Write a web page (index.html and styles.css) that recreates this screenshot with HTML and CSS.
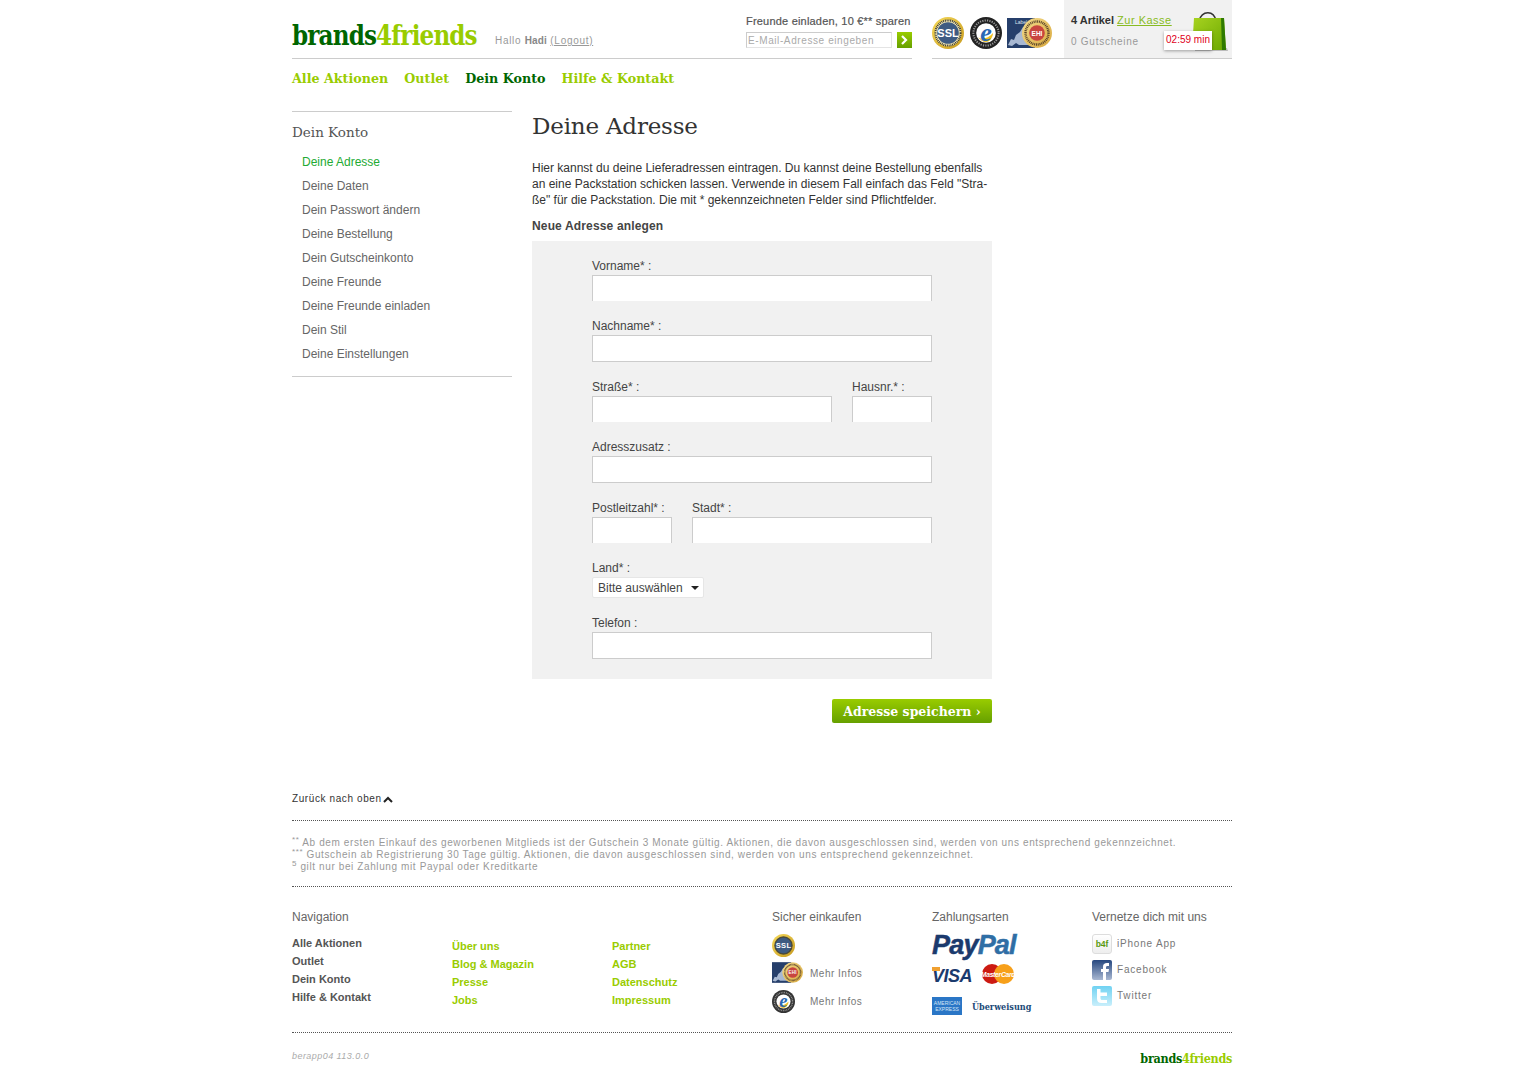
FILE: index.html
```html
<!DOCTYPE html>
<html lang="de">
<head>
  <meta charset="UTF-8">
  <title>Deine Adresse - brands4friends</title>
  <link rel="stylesheet" href="styles.css">
</head>
<body>
  <!-- shared gradients -->
  <svg class="sprite" width="0" height="0">
    <defs>
      <linearGradient id="goldGrad" x1="0" y1="0" x2="1" y2="1">
        <stop offset="0" stop-color="#f5d95a"/>
        <stop offset="1" stop-color="#c79a1e"/>
      </linearGradient>
      <linearGradient id="ehiGrad" x1="0" y1="0" x2="1" y2="1">
        <stop offset="0" stop-color="#f4dc8e"/>
        <stop offset="1" stop-color="#d8a83c"/>
      </linearGradient>
      <linearGradient id="bagGrad" x1="0" y1="0" x2="1" y2="1">
        <stop offset="0" stop-color="#a8d320"/>
        <stop offset="1" stop-color="#6aa800"/>
      </linearGradient>
      <linearGradient id="fbGrad" x1="0" y1="0" x2="0" y2="1">
        <stop offset="0" stop-color="#26477f"/>
        <stop offset="1" stop-color="#a9b8d2"/>
      </linearGradient>
      <linearGradient id="twGrad" x1="0" y1="0" x2="0" y2="1">
        <stop offset="0" stop-color="#6fd2f2"/>
        <stop offset="1" stop-color="#c9effb"/>
      </linearGradient>
    </defs>
  </svg>

  <div class="page">
    <header class="topbar">
      <div class="topbar-left">
        <a class="logo"><span class="logo-text"><span class="logo-dark">brands</span>4friends</span></a>
        <span class="hello">Hallo <b>Hadi</b> <u>(Logout)</u></span>
        <div class="invite">
          <div class="invite-title">Freunde einladen, 10 €** sparen</div>
          <div class="invite-form">
            <input class="invite-input" type="text" placeholder="E-Mail-Adresse eingeben">
            <span class="invite-btn">
              <svg width="7" height="10" viewBox="0 0 7 10"><path d="M1 1l4 4-4 4" fill="none" stroke="#fff" stroke-width="2.2"/></svg>
            </span>
          </div>
        </div>
      </div>
      <div class="topbar-right">
        <div class="seals">
          <svg width="32" height="32" viewBox="0 0 32 32">
            <circle cx="16" cy="16" r="16" fill="url(#goldGrad)"/>
            <circle cx="16" cy="16" r="13.2" fill="#f4e9b8"/>
            <circle cx="16" cy="16" r="12.6" fill="none" stroke="#3c3c30" stroke-width="2" stroke-dasharray="1 .8"/>
            <circle cx="16" cy="16" r="10.8" fill="#3e5b82"/>
            <text x="16" y="20" class="badge-txt" font-size="11" fill="#fff">SSL</text>
          </svg>
          <svg width="32" height="32" viewBox="0 0 32 32">
            <circle cx="16" cy="16" r="16" fill="#222"/>
            <circle cx="16" cy="16" r="12.6" fill="none" stroke="#999" stroke-width="2" stroke-dasharray="1.2 1.2"/>
            <circle cx="16" cy="16" r="9.8" fill="#fff"/>
            <path d="M8 20c3 3 10 2 15-4 0 4-3 9-7 9-3 0-6-2-8-5z" fill="#f0c020"/>
            <text x="16" y="24" class="badge-e-txt" font-size="26" fill="#2a68b4">e</text>
          </svg>
          <svg class="seal-ehi" width="45" height="30" viewBox="0 0 45 30">
            <rect x="0" y="0" width="28" height="30" fill="#263f6b"/>
            <path d="M1 27l3-6 3 1 2-5 4-3 3-5 5 1 4 5-2 12H12l-3-2-4 3z" fill="#a8b8d2"/>
            <text x="8" y="6" class="badge-small" font-size="5" fill="#dfe6f0">Label</text>
            <circle cx="30" cy="15" r="15" fill="url(#ehiGrad)"/>
            <circle cx="30" cy="15" r="11.5" fill="none" stroke="#57422a" stroke-width="2.4" stroke-dasharray="1 .8"/>
            <circle cx="30" cy="15" r="7.8" fill="#c8453f"/>
            <text x="30" y="17.6" class="badge-txt" font-size="6.5" fill="#fff">EHI</text>
          </svg>
        </div>
        <div class="cart">
          <div class="cart-line"><b>4 Artikel</b> <a class="cart-link">Zur Kasse</a></div>
          <div class="cart-vouchers">0 Gutscheine</div>
          <svg class="cart-bag" width="38" height="42" viewBox="0 0 38 42">
            <path d="M4 41h33l-1-3H4z" fill="#bbb"/>
            <path d="M8 11c3-11 15-11 17 0" fill="none" stroke="#333" stroke-width="1.5"/>
            <path d="M3 8h30l2 32H1z" fill="url(#bagGrad)"/>
            <path d="M30 8h3l2 32h-4z" fill="#2f7a00"/>
          </svg>
          <div class="cart-timer">02:59 min</div>
        </div>
      </div>
    </header>

    <nav class="mainnav">
      <a>Alle Aktionen</a>
      <a>Outlet</a>
      <a class="current">Dein Konto</a>
      <a>Hilfe &amp; Kontakt</a>
    </nav>

    <div class="columns">
      <aside class="sidebar">
        <h2>Dein Konto</h2>
        <ul>
          <li class="active">Deine Adresse</li>
          <li>Deine Daten</li>
          <li>Dein Passwort ändern</li>
          <li>Deine Bestellung</li>
          <li>Dein Gutscheinkonto</li>
          <li>Deine Freunde</li>
          <li>Deine Freunde einladen</li>
          <li>Dein Stil</li>
          <li>Deine Einstellungen</li>
        </ul>
      </aside>

      <main class="content">
        <h1>Deine Adresse</h1>
        <p class="intro">Hier kannst du deine Lieferadressen eintragen. Du kannst deine Bestellung ebenfalls<br>
          an eine Packstation schicken lassen. Verwende in diesem Fall einfach das Feld "Stra-<br>
          ße" für die Packstation. Die mit * gekennzeichneten Felder sind Pflichtfelder.</p>
        <h3>Neue Adresse anlegen</h3>

        <form class="address-form">
          <div class="field">
            <label>Vorname* :</label>
            <input class="w-full open" type="text">
          </div>
          <div class="field">
            <label>Nachname* :</label>
            <input class="w-full" type="text">
          </div>
          <div class="field-row">
            <div class="field">
              <label>Straße* :</label>
              <input class="w-street open" type="text">
            </div>
            <div class="field">
              <label>Hausnr.* :</label>
              <input class="w-house open" type="text">
            </div>
          </div>
          <div class="field">
            <label>Adresszusatz :</label>
            <input class="w-full" type="text">
          </div>
          <div class="field-row">
            <div class="field">
              <label>Postleitzahl* :</label>
              <input class="w-zip open" type="text">
            </div>
            <div class="field">
              <label>Stadt* :</label>
              <input class="w-city open" type="text">
            </div>
          </div>
          <div class="field">
            <label>Land* :</label>
            <span class="select-wrap">
              <select class="country"><option>Bitte auswählen</option></select>
            </span>
          </div>
          <div class="field last">
            <label>Telefon :</label>
            <input class="w-full" type="text">
          </div>
        </form>

        <div class="form-actions">
          <button class="save-btn" type="button">Adresse speichern ›</button>
        </div>
      </main>
    </div>

    <footer class="footer">
      <a class="to-top">Zurück nach oben<svg class="to-top-arrow" width="10" height="7" viewBox="0 0 10 7"><path d="M1 6l4-4 4 4" fill="none" stroke="#222" stroke-width="2"/></svg></a>
      <div class="notes">
        <sup>**</sup> Ab dem ersten Einkauf des geworbenen Mitglieds ist der Gutschein 3 Monate gültig. Aktionen, die davon ausgeschlossen sind, werden von uns entsprechend gekennzeichnet.<br>
        <sup>***</sup> Gutschein ab Registrierung 30 Tage gültig. Aktionen, die davon ausgeschlossen sind, werden von uns entsprechend gekennzeichnet.<br>
        <sup>5</sup> gilt nur bei Zahlung mit Paypal oder Kreditkarte
      </div>

      <div class="footer-grid">
        <div class="fcol">
          <h4>Navigation</h4>
          <ul class="flinks dark">
            <li>Alle Aktionen</li>
            <li>Outlet</li>
            <li>Dein Konto</li>
            <li>Hilfe &amp; Kontakt</li>
          </ul>
        </div>
        <div class="fcol">
          <ul class="flinks lime">
            <li>Über uns</li>
            <li>Blog &amp; Magazin</li>
            <li>Presse</li>
            <li>Jobs</li>
          </ul>
        </div>
        <div class="fcol">
          <ul class="flinks lime">
            <li>Partner</li>
            <li>AGB</li>
            <li>Datenschutz</li>
            <li>Impressum</li>
          </ul>
        </div>
        <div class="fcol">
          <h4>Sicher einkaufen</h4>
          <div class="safe-list">
            <div class="safe-row r1">
              <svg width="23" height="23" viewBox="0 0 32 32">
                <circle cx="16" cy="16" r="16" fill="url(#goldGrad)"/>
                <circle cx="16" cy="16" r="12.8" fill="#4a4a3a"/>
                <circle cx="16" cy="16" r="10.8" fill="#3e5b82"/>
                <text x="16" y="20" class="badge-txt" font-size="10.5" fill="#fff">SSL</text>
              </svg>
            </div>
            <div class="safe-row r2">
              <svg width="31" height="21" viewBox="0 0 45 30">
                <rect x="0" y="0" width="28" height="30" fill="#263f6b"/>
                <path d="M1 27l3-6 3 1 2-5 4-3 3-5 5 1 4 5-2 12H12l-3-2-4 3z" fill="#a8b8d2"/>
                <circle cx="30" cy="15" r="15" fill="url(#ehiGrad)"/>
                <circle cx="30" cy="15" r="11.5" fill="none" stroke="#57422a" stroke-width="2.4" stroke-dasharray="1 .8"/>
                <circle cx="30" cy="15" r="7.8" fill="#c8453f"/>
                <text x="30" y="17.6" class="badge-txt" font-size="6.5" fill="#fff">EHI</text>
              </svg>
              <span>Mehr Infos</span>
            </div>
            <div class="safe-row r3">
              <svg width="23" height="23" viewBox="0 0 32 32">
                <circle cx="16" cy="16" r="16" fill="#333"/>
                <circle cx="16" cy="16" r="12.6" fill="none" stroke="#999" stroke-width="2" stroke-dasharray="1.2 1.2"/>
                <circle cx="16" cy="16" r="9.8" fill="#fff"/>
                <path d="M8 20c3 3 10 2 15-4 0 4-3 9-7 9-3 0-6-2-8-5z" fill="#f0c020"/>
                <text x="16" y="24" class="badge-e-txt" font-size="26" fill="#2a68b4">e</text>
              </svg>
              <span>Mehr Infos</span>
            </div>
          </div>
        </div>
        <div class="fcol">
          <h4>Zahlungsarten</h4>
          <div class="pay-list">
            <div class="paypal"><span class="pp-a">Pay</span><span class="pp-b">Pal</span></div>
            <div class="pay-row cards">
              <span class="visa">VISA</span>
              <svg width="32" height="20" viewBox="0 0 32 20">
                <circle cx="10" cy="10" r="10" fill="#cc1a12"/>
                <circle cx="22" cy="10" r="10" fill="#f7a01a"/>
                <text x="16" y="12.5" class="mc-txt" font-size="6.8" fill="#fff">MasterCard</text>
              </svg>
            </div>
            <div class="pay-row bank">
              <span class="amex">AMERICAN<br>EXPRESS</span>
              <span class="transfer">Überweisung</span>
            </div>
          </div>
        </div>
        <div class="fcol">
          <h4>Vernetze dich mit uns</h4>
          <div class="social-list">
            <div class="social-row">
              <span class="ico ico-app">b4f</span>
              <span>iPhone App</span>
            </div>
            <div class="social-row">
              <svg class="ico" width="20" height="20" viewBox="0 0 20 20">
                <rect width="20" height="20" rx="2" fill="url(#fbGrad)"/>
                <path d="M11 20v-8H9V9h2V7c0-3 1.500-4 4-4h2v3h-1.500c-1 0-1.500.5-1.500 1.500V9h3l-.5 3H14v8z" fill="#fff"/>
              </svg>
              <span>Facebook</span>
            </div>
            <div class="social-row">
              <svg class="ico" width="20" height="20" viewBox="0 0 20 20">
                <rect width="20" height="20" rx="2" fill="url(#twGrad)"/>
                <path d="M5 3h3.500v3.500H15V10H8.500v2c0 1.500.5 2 2 2H15v3h-5.500C6.500 17 5 15.500 5 12.500z" fill="#fff"/>
              </svg>
              <span>Twitter</span>
            </div>
          </div>
        </div>
      </div>

      <div class="footer-end">
        <span class="build">berapp04 113.0.0</span>
        <span class="logo-small"><span class="logo-dark">brands</span>4friends</span>
      </div>
    </footer>
  </div>
</body>
</html>
```

FILE: styles.css
```css
* {
  box-sizing: border-box;
}

body {
  margin: 0;
  font-family: "Liberation Sans", Arial, sans-serif;
  font-size: 12px;
  line-height: 16px;
  color: #444;
  background: #fff;
}

ul {
  list-style: none;
  margin: 0;
  padding: 0;
}

.sprite {
  display: block;
  overflow: hidden;
}

.badge-txt {
  font-family: "Liberation Sans", Arial, sans-serif;
  font-weight: bold;
  text-anchor: middle;
}

.badge-e-txt {
  font-family: "Liberation Serif", serif;
  font-style: italic;
  font-weight: bold;
  text-anchor: middle;
}

.badge-small {
  font-family: "Liberation Sans", Arial, sans-serif;
}

.mc-txt {
  font-family: "Liberation Sans", Arial, sans-serif;
  font-weight: bold;
  font-style: italic;
  text-anchor: middle;
  letter-spacing: -0.3px;
}

.page {
  width: 940px;
  margin: 0 auto;
}

/* header */
.topbar {
  display: flex;
  justify-content: space-between;
  height: 59px;
}

.topbar-left {
  width: 620px;
  display: flex;
  align-items: flex-end;
  border-bottom: 1px solid #ccc;
}

.logo {
  width: 203px;
  height: 30px;
  margin-bottom: 7px;
  overflow: visible;
  white-space: nowrap;
}

/* rockwell stand-in: wide slab squeezed down to the logo's width */
.logo-text {
  display: inline-block;
  font-family: "DejaVu Serif", serif;
  font-weight: bold;
  font-size: 27px;
  line-height: 30px;
  letter-spacing: -1px;
  color: #99cc00;
  transform: scaleX(0.855);
  transform-origin: left center;
}

.logo-dark {
  color: #006600;
}

.hello {
  font-size: 10px;
  line-height: 12px;
  color: #999;
  letter-spacing: 0.7px;
  margin-bottom: 11px;
}

.hello b {
  color: #888;
  letter-spacing: 0.1px;
}

.invite {
  margin-left: auto;
  width: 166px;
  margin-bottom: 10px;
}

.invite-title {
  font-size: 11px;
  line-height: 14px;
  color: #555;
  white-space: nowrap;
  margin-bottom: 4px;
  letter-spacing: 0.2px;
  -webkit-text-stroke: 0.2px #555;
}

.invite-form {
  display: flex;
  justify-content: space-between;
}

.invite-input {
  width: 146px;
  height: 16px;
  border: 1px solid #ccc;
  border-right-color: #e4e4e4;
  border-bottom-color: #e4e4e4;
  padding: 0 1px;
  font-family: inherit;
  font-size: 10px;
  letter-spacing: 0.6px;
  background: #fff;
}

.invite-input::placeholder {
  color: #aaa;
  opacity: 1;
}

.invite-btn {
  width: 15px;
  height: 16px;
  background: linear-gradient(#99cc00, #66a000);
  display: flex;
  align-items: center;
  justify-content: center;
}

.topbar-right {
  width: 300px;
  display: flex;
  border-bottom: 1px solid #ccc;
}

.seals {
  width: 132px;
  display: flex;
  align-items: flex-start;
  padding-top: 17px;
  gap: 6px;
}

.seal-ehi {
  margin-left: -1px;
  margin-top: 1px;
}

.cart {
  flex: 1;
  background: #f1f1f1;
  padding: 12px 0 0 7px;
  position: relative;
}

.cart-line {
  font-size: 11px;
  line-height: 16px;
  color: #333;
}

.cart-link {
  color: #88bb22;
  text-decoration: underline;
  letter-spacing: 0.5px;
}

.cart-vouchers {
  font-size: 10px;
  line-height: 14px;
  color: #999;
  letter-spacing: 0.75px;
  margin-top: 7px;
}

.cart-bag {
  position: absolute;
  left: 127px;
  top: 10px;
}

.cart-timer {
  position: absolute;
  left: 100px;
  top: 31px;
  width: 48px;
  height: 19px;
  background: #fff;
  box-shadow: 0 1px 3px rgba(0, 0, 0, 0.35);
  color: #e0001a;
  font-size: 10px;
  line-height: 18px;
  text-align: center;
  white-space: nowrap;
}

/* main navigation */
.mainnav {
  display: flex;
  gap: 16px;
  height: 52px;
  padding-top: 11px;
  font-family: "DejaVu Serif", serif;
  font-weight: bold;
  font-size: 12.7px;
  line-height: 18px;
  color: #99cc00;
}

.mainnav .current {
  color: #006600;
}

/* columns */
.columns {
  display: flex;
  gap: 20px;
}

.sidebar {
  width: 220px;
  height: 266px;
  border-top: 1px solid #ccc;
  border-bottom: 1px solid #ccc;
}

.sidebar h2 {
  margin: 11px 0 9px;
  font-family: "DejaVu Serif", serif;
  font-weight: normal;
  font-size: 13.5px;
  line-height: 18px;
  color: #555;
}

.sidebar li {
  padding-left: 10px;
  line-height: 24px;
  color: #666;
}

.sidebar li.active {
  color: #22aa33;
}

.content {
  width: 460px;
}

.content h1 {
  margin: 0 0 19px;
  font-family: "DejaVu Serif", serif;
  font-weight: normal;
  font-size: 23px;
  line-height: 30px;
  letter-spacing: -0.2px;
  color: #333;
}

.intro {
  margin: 0 0 10px;
  color: #333;
  white-space: nowrap;
}

.content h3 {
  margin: 0 0 7px;
  font-size: 12px;
  line-height: 16px;
  letter-spacing: 0.15px;
  color: #444;
}

.address-form {
  background: #f1f1f1;
  padding: 18px 60px 20px;
}

.field {
  margin-bottom: 18px;
}

.field.last {
  margin-bottom: 0;
}

.field label {
  display: block;
  height: 16px;
  line-height: 14px;
  color: #444;
}

.field-row {
  display: flex;
  gap: 20px;
}

.field input {
  display: block;
  height: 27px;
  border: 1px solid #ccc;
  background: #fff;
  padding: 0 4px;
}

/* these show no lower edge in the original */
.field input.open {
  height: 26px;
  border-bottom: 0;
}

.w-full {
  width: 340px;
}

.w-street {
  width: 240px;
}

.w-house {
  width: 80px;
}

.w-zip {
  width: 80px;
}

.w-city {
  width: 240px;
}

.select-wrap {
  display: block;
  width: 112px;
  height: 21px;
  position: relative;
}

.select-wrap::after {
  content: "";
  position: absolute;
  right: 5px;
  top: 9px;
  border-top: 4px solid #222;
  border-left: 4px solid transparent;
  border-right: 4px solid transparent;
}

.country {
  appearance: none;
  -webkit-appearance: none;
  display: block;
  width: 112px;
  height: 21px;
  border: 1px solid #e6e6e6;
  border-radius: 2px;
  background: #fff;
  padding: 0 0 0 5px;
  font-family: inherit;
  font-size: 12px;
  color: #444;
}

.form-actions {
  display: flex;
  justify-content: flex-end;
  margin-top: 20px;
}

.save-btn {
  width: 160px;
  height: 24px;
  border: 0;
  border-radius: 2px;
  background: linear-gradient(#99cc00, #66a000);
  color: #fff;
  font-family: "DejaVu Serif", serif;
  font-weight: bold;
  font-size: 12.5px;
  line-height: 22px;
  padding: 2px 0 0;
}

/* footer */
.footer {
  margin-top: 70px;
}

.to-top {
  display: block;
  height: 28px;
  border-bottom: 1px dotted #555;
  font-size: 10px;
  line-height: 12px;
  color: #333;
  letter-spacing: 0.6px;
}

.to-top-arrow {
  margin-left: 1px;
  vertical-align: -1px;
}

.notes {
  height: 66px;
  padding-top: 16px;
  border-bottom: 1px dotted #555;
  font-size: 10px;
  line-height: 12px;
  color: #999;
  letter-spacing: 0.61px;
  white-space: nowrap;
}

.notes sup {
  font-size: 8px;
  line-height: 0;
}

.footer-grid {
  display: grid;
  grid-template-columns: repeat(6, 160px);
  height: 146px;
  padding-top: 23px;
  border-bottom: 1px dotted #555;
}

.fcol h4 {
  margin: 0 0 10px;
  font-weight: normal;
  font-size: 12px;
  line-height: 14px;
  color: #666;
}

.flinks {
  font-size: 11px;
  line-height: 18px;
  font-weight: bold;
}

.flinks.dark {
  color: #555;
}

.flinks.lime {
  color: #99cc00;
  padding-top: 27px;
}

.safe-row {
  display: flex;
  align-items: center;
  font-size: 10px;
  color: #777;
  letter-spacing: 0.5px;
}

.safe-row span {
  margin-left: 7px;
}

.safe-row.r1 {
  height: 23px;
  margin-bottom: 5px;
}

.safe-row.r2 {
  height: 21px;
  margin-bottom: 7px;
}

.safe-row.r2 span {
  padding-top: 2px;
}

.safe-row.r3 {
  height: 23px;
}

.safe-row.r3 span {
  margin-left: 15px;
}

.paypal {
  font-style: italic;
  font-weight: bold;
  font-size: 27px;
  line-height: 24px;
  letter-spacing: -0.8px;
  height: 24px;
  margin-top: -1px;
  -webkit-text-stroke: 0.5px currentColor;
}

.pp-a {
  color: #1b3a6d;
}

.pp-b {
  color: #2f6ea5;
}

.pay-row {
  display: flex;
  align-items: center;
}

.cards {
  margin-top: 7px;
  height: 20px;
  gap: 11px;
}

.visa {
  position: relative;
  font-style: italic;
  font-weight: bold;
  font-size: 18px;
  line-height: 20px;
  color: #1b3a6d;
  width: 39px;
  padding-top: 4px;
  letter-spacing: -0.5px;
}

.visa::before {
  content: "";
  position: absolute;
  left: 0;
  top: 5px;
  width: 8px;
  height: 4px;
  background: #f0a030;
}

.bank {
  margin-top: 13px;
  gap: 10px;
}

.amex {
  width: 30px;
  height: 18px;
  background: #2a76c6;
  color: #d6e6f6;
  font-size: 5px;
  line-height: 6px;
  text-align: center;
  padding-top: 3px;
}

.transfer {
  font-family: "DejaVu Serif Condensed", "DejaVu Serif", serif;
  font-weight: bold;
  font-size: 9px;
  color: #1b4a78;
  padding-top: 1px;
}

.social-row {
  display: flex;
  align-items: center;
  gap: 5px;
  height: 20px;
  margin-bottom: 6px;
  font-size: 10px;
  color: #777;
  letter-spacing: 0.8px;
}

.social-list {
  margin-top: 2px;
}

.ico {
  flex: none;
  width: 20px;
  height: 20px;
}

.ico-app {
  border: 1px solid #ddd;
  border-radius: 3px;
  background: linear-gradient(#fff, #eee);
  color: #5a9a10;
  font-size: 8.5px;
  font-weight: bold;
  line-height: 18px;
  text-align: center;
  letter-spacing: 0;
}

.footer-end {
  display: flex;
  justify-content: space-between;
  padding-top: 15px;
}

.build {
  font-size: 9px;
  font-style: italic;
  color: #aaa;
  letter-spacing: 0.45px;
}

.logo-small {
  font-family: "DejaVu Serif Condensed", "DejaVu Serif", serif;
  font-weight: bold;
  font-size: 12.5px;
  letter-spacing: -0.3px;
  color: #99cc00;
  padding-top: 3px;
}
```
